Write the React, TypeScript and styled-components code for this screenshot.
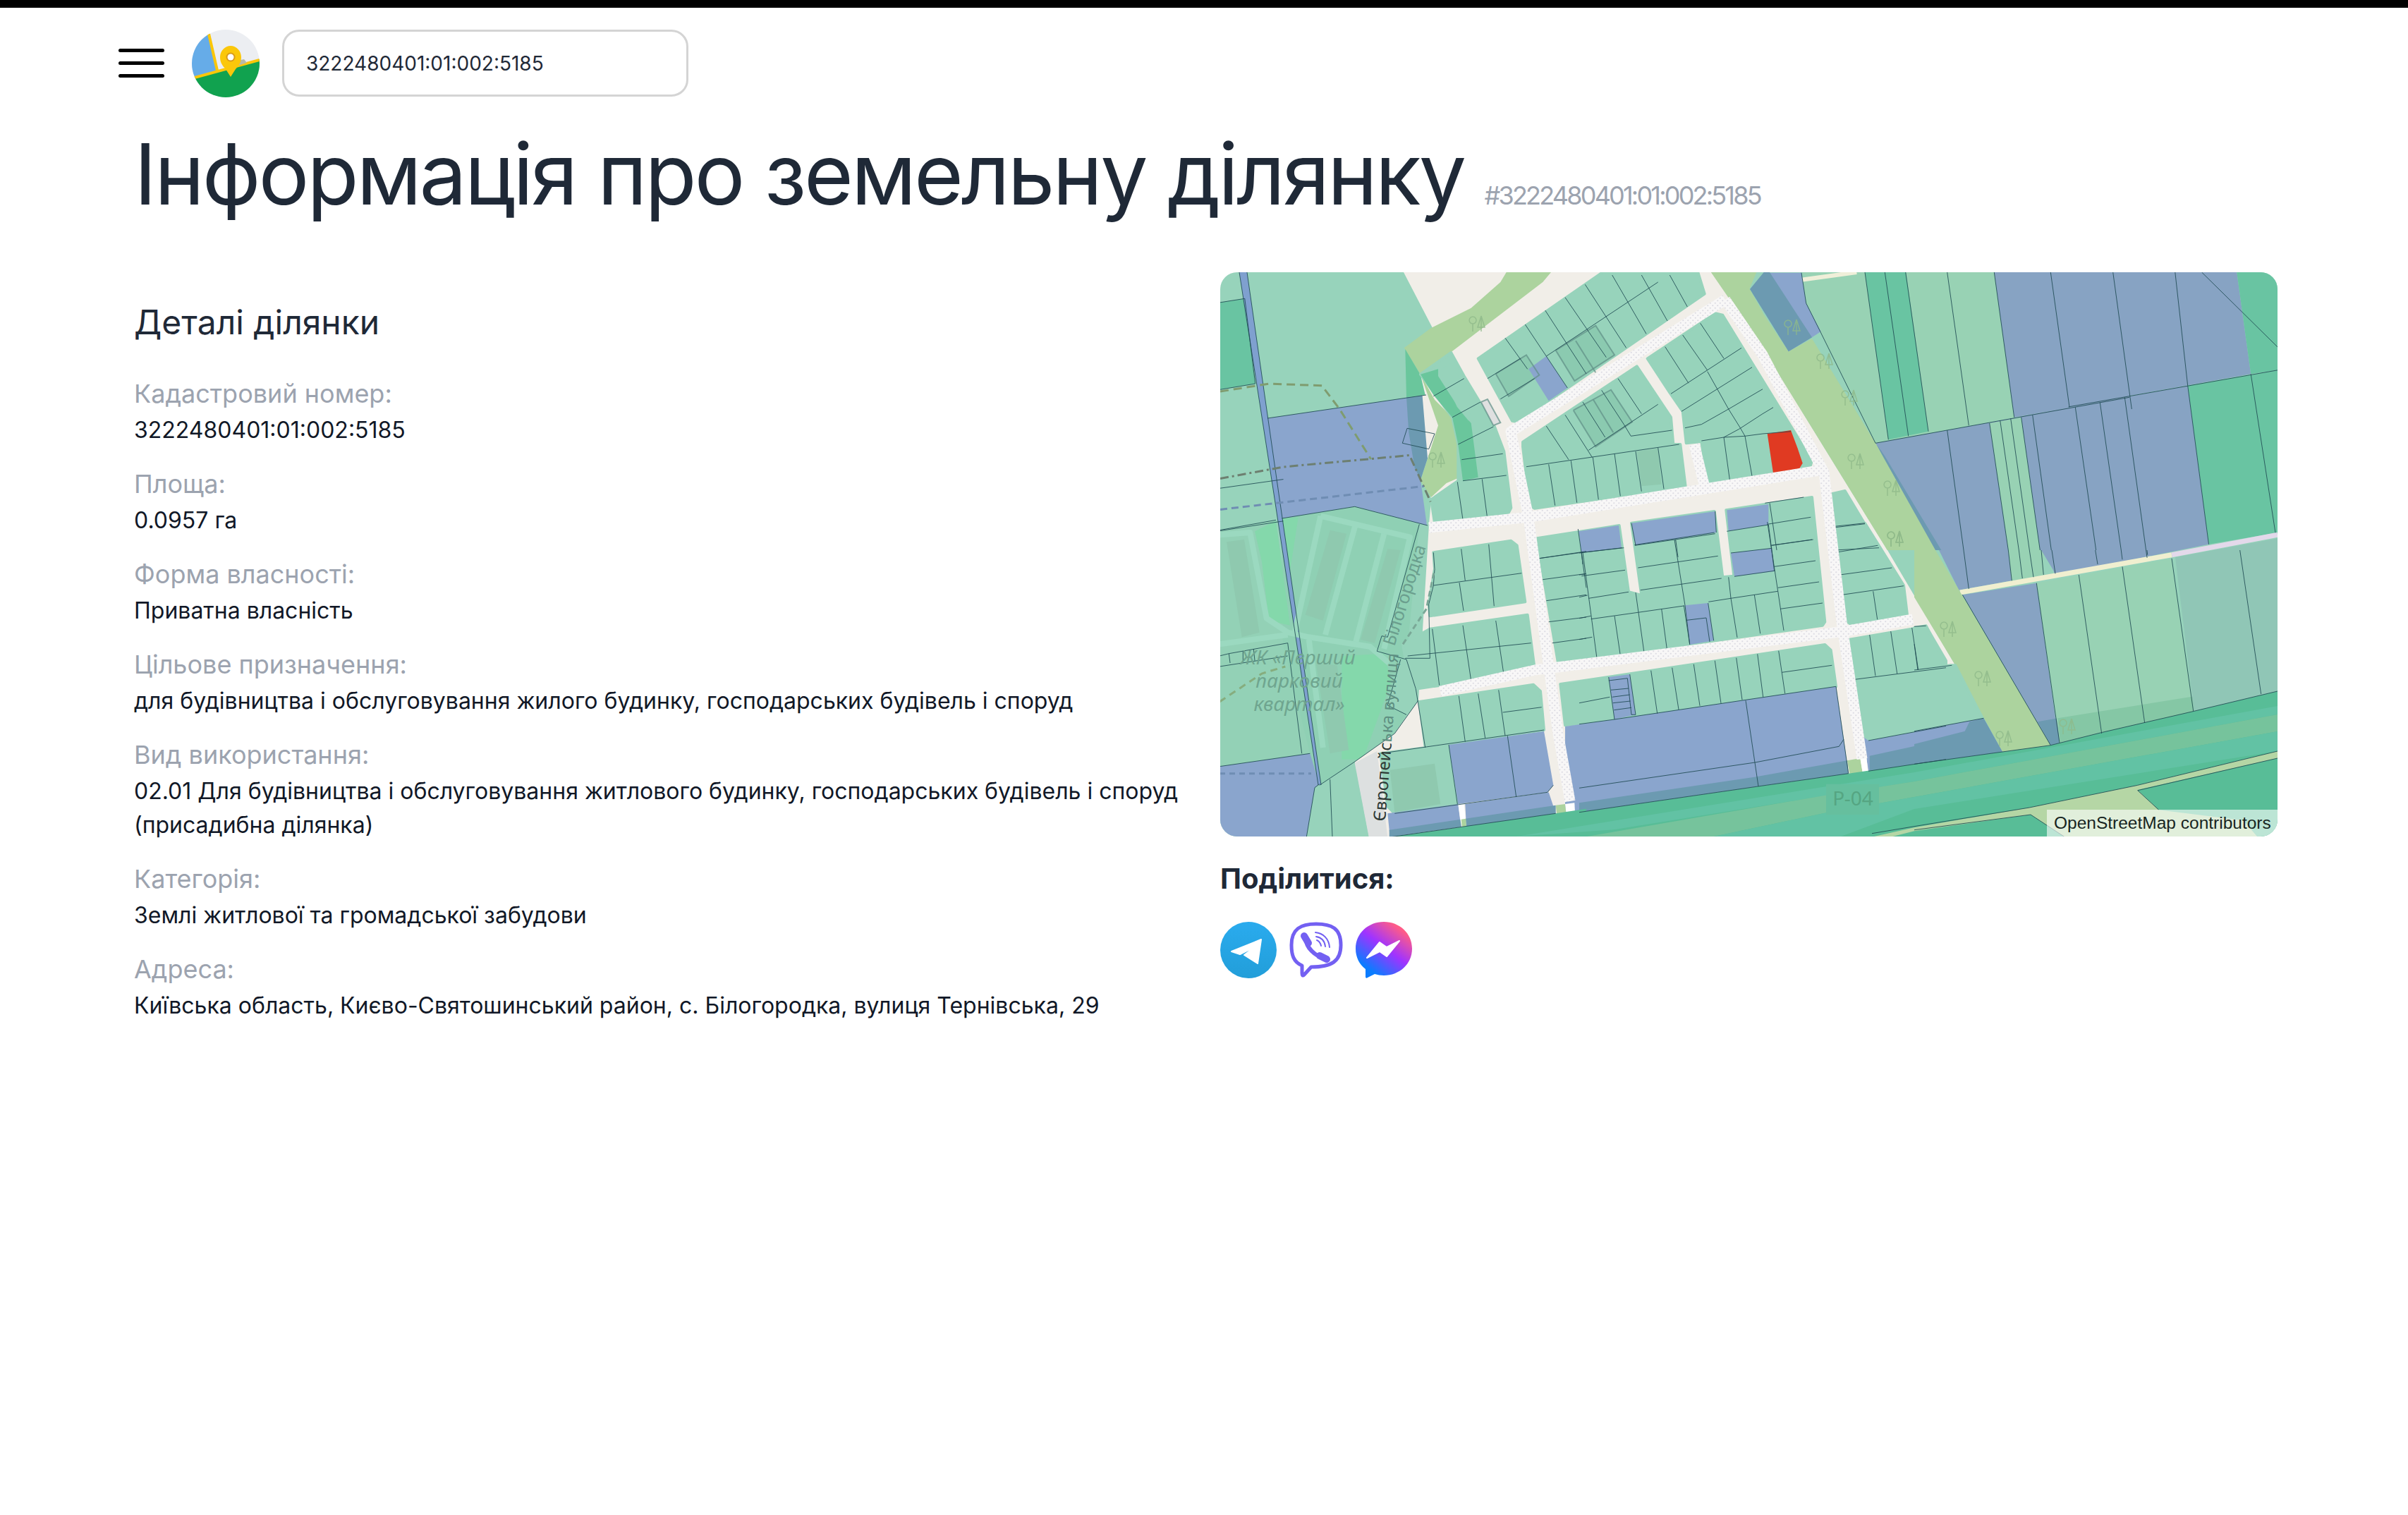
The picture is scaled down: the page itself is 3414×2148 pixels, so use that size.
import styled, { createGlobalStyle } from 'styled-components'

const GlobalStyle = createGlobalStyle`
  html, body {
    margin: 0;
    padding: 0;
    background: #fff;
    font-family: Inter, "Noto Sans", sans-serif;
  }
  * { box-sizing: border-box; }
`

const details = [
  { label: 'Кадастровий номер:', value: '3222480401:01:002:5185' },
  { label: 'Площа:', value: '0.0957 га' },
  { label: 'Форма власності:', value: 'Приватна власність' },
  {
    label: 'Цільове призначення:',
    value: 'для будівництва і обслуговування жилого будинку, господарських будівель і споруд',
  },
  {
    label: 'Вид використання:',
    value:
      '02.01 Для будівництва і обслуговування житлового будинку, господарських будівель і споруд (присадибна ділянка)',
  },
  { label: 'Категорія:', value: 'Землі житлової та громадської забудови' },
  { label: 'Адреса:', value: 'Київська область, Києво-Святошинський район, с. Білогородка, вулиця Тернівська, 29' },
]

// map drawing was traced from several crops, each has its own origin and scale
const tracer = (fx: (x: number) => number, fy: (y: number) => number) => (a: number[]) => {
  const out: string[] = []
  for (let i = 0; i < a.length; i += 2) out.push(+fx(a[i]).toFixed(1) + ',' + +fy(a[i + 1]).toFixed(1))
  return out.join(' ')
}
const crop = (ox: number, oy: number) =>
  tracer(
    (x) => x / 3 + ox - 1731,
    (y) => y / 3 + oy - 386
  )
const P = tracer(
  (x) => (x - 30) * 0.994,
  (y) => (y - 47) * 0.5487
)
const R = tracer(
  (x) => x,
  (y) => y
)
const A = crop(1980, 400)
const B = crop(1730, 700)
const C = crop(2240, 740)
const D = crop(2500, 380)
const E = crop(2715, 780)

const TEAL = '#97d3bb'
const FIELD = '#98d2b4'
const BLUE = '#8aa5cd'
const GREY_BLUE = '#87a3c3'
const DEEP_BLUE = '#6c9ab1'
const DARK_GREEN = '#69c4a2'
const PARK = '#acd39e'
const CREAM = '#f1eee8'
const BUILDING = '#8fc9af'
const HIGHWAY = '#58bd97'

const underlay: [string, string][] = [
  [DARK_GREEN, P([30, 125, 65, 115, 80, 335, 30, 350])],
  [BLUE, R([67, 207, 292, 174, 309, 217, 284, 294, 293, 359, 191, 332, 88, 349])],
  [DEEP_BLUE, A([45, 490, 130, 480, 180, 610, 105, 840, 80, 790, 55, 640])],
  [BLUE, P([368, 47, 412, 47, 385, 85])],
  // housing estate
  ['#93d1b6', B([0, 155, 240, 112, 385, 1105, 0, 1160])],
  ['#8fd0b4', B([265, 105, 575, 55, 850, 130, 795, 705, 770, 705, 715, 900, 795, 940, 740, 1025, 575, 1140, 425, 1240, 385, 1105, 270, 640])],
  ['#84d8ab', B([150, 160, 240, 115, 300, 560, 210, 540, 180, 290])],
  ['#84d8ab', B([265, 105, 335, 100, 295, 360])],
  ['#84d8ab', B([520, 690, 700, 680, 730, 800, 610, 1130, 520, 1130])],
  [BLUE, B([0, 1160, 385, 1105, 425, 1235, 405, 1250, 370, 1460, 0, 1460])],
  [TEAL, B([425, 1240, 575, 1145, 635, 1460, 395, 1460])],
  ['#7fa0cf', R([27, 0, 38, 0, 83, 314, 143, 727, 139, 727, 76, 314])],
  // fields on the right
  [GREY_BLUE, P([1135, 47, 1480, 47, 1500, 310, 1240, 395, 1170, 415])],
  [DARK_GREEN, P([1480, 47, 1538, 47, 1538, 300, 1500, 310])],
  [DARK_GREEN, P([1410, 340, 1538, 300, 1538, 720, 1440, 750])],
  [GREY_BLUE, P([1170, 420, 1410, 340, 1440, 750, 1220, 830])],
  [FIELD, D([170, 18, 985, 18, 1070, 635, 480, 745, 245, 270, 185, 150])],
  [DARK_GREEN, D([435, 18, 610, 18, 705, 695, 535, 730])],
  [GREY_BLUE, D([985, 18, 1560, 18, 1560, 550, 1070, 635])],
  [GREY_BLUE, D([480, 745, 1560, 550, 1560, 1200, 740, 1200])],
  [FIELD, D([965, 660, 1100, 635, 1180, 1200, 1045, 1200])],
  [DEEP_BLUE, D([485, 750, 520, 800, 760, 1200, 700, 1200])],
  [GREY_BLUE, E([105, 0, 400, 0, 415, 130, 190, 170])],
  [GREY_BLUE, E([205, 190, 520, 140, 615, 820, 580, 830])],
  [DEEP_BLUE, E([525, 730, 610, 715, 617, 820, 580, 830])],
  [FIELD, E([400, 0, 550, 0, 550, 105, 415, 130])],
  [GREY_BLUE, E([540, 0, 1120, 0, 600, 100])],
  [FIELD, E([520, 140, 1095, 35, 1190, 690, 620, 820])],
  ['#85c7a5', E([610, 715, 1200, 620, 1190, 690, 620, 820])],
  ['#90c6b6', E([1110, 30, 1545, -50, 1545, 600, 1190, 685])],
]

const neighbourhood = R([
  260, 0, 715, 0, 769, 107, 946, 394, 1042, 557, 984, 600, 919, 707, 502, 767, 240, 800, 211, 800, 191, 694, 247, 654,
  281, 607, 296, 357, 299, 324, 284, 144, 301, 79,
])

const greens: [string, string][] = [
  [PARK, P([730, 47, 795, 47, 785, 90, 804, 151, 804, 242])],
  [PARK, D([0, 190, 110, 355, 210, 300, 480, 745, 735, 1200, 530, 1200, 0, 340])],
  [PARK, E([0, 0, 90, 0, 580, 830, 375, 858, 175, 490, 0, 200])],
  [PARK, A([35, 280, 150, 195, 320, 110, 445, 0, 470, -42, 660, -42, 625, 0, 235, 298, 105, 392])],
  [PARK, A([105, 392, 165, 500, 240, 575, 265, 690, 285, 825, 215, 855, 150, 915, 105, 845, 180, 610])],
  ['#6ac69c', A([40, 285, 105, 395, 125, 480, 45, 490])],
  [BLUE, D([30, 20, 165, 20, 185, 150, 248, 270, 210, 295, 110, 355])],
  [DEEP_BLUE, D([-54, 90, 5, 18, 30, 18, 210, 295, 110, 355])],
]

const blocks: string[] = [
  // north of the diagonal street
  A([350, 325, 880, -42, 1285, -42, 1313, 50, 520, 595, 495, 590]),
  A([1070, 325, 1358, 133, 1390, 140, 1770, 760, 1760, 790, 1325, 855, 1300, 678, 1235, 685, 1220, 550, 1165, 470]),
  A([540, 680, 1025, 358, 1170, 575, 1180, 690, 1210, 690, 1232, 870, 590, 962, 570, 950, 540, 700]),
  A([105, 392, 235, 300, 290, 400, 420, 615, 460, 720, 490, 960, 480, 980, 165, 1025, 150, 925, 265, 845, 265, 690, 240, 575]),
  // west of the main north-south street
  B([910, 250, 1240, 200, 1265, 220, 1300, 460, 895, 520, 890, 470, 915, 320]),
  B([895, 575, 1310, 515, 1340, 745, 1320, 760, 835, 830, 790, 700, 780, 640]),
  B([850, 885, 1335, 812, 1365, 840, 1380, 1005, 875, 1080]),
  B([685, 1105, 975, 1068, 1012, 1320, 745, 1360, 715, 1330]),
  // middle quarter
  C([-180, 70, 170, 15, 210, 298, 265, 312, 222, 5, 575, -45, 610, 235, 658, 230, 625, -50, 990, -105, 1045, 425, 1035, 440, -90, 600]),
  C([-80, 690, 1045, 522, 1070, 545, 1092, 700, 150, 840, -60, 865]),
  C([1150, 500, 1475, 445, 1560, 590, 1560, 870, 1230, 930, 1205, 910, 1170, 670]),
  C([1080, 25, 1215, 5, 1380, 270, 1395, 395, 1150, 432, 1135, 420]),
  D([275, 965, 350, 948, 435, 1090, 495, 1190, 300, 1200]),
  E([0, 330, 50, 322, 135, 490, 0, 510]),
  E([0, 510, 155, 490, 175, 490, 290, 715, 0, 770]),
]

const overlays: [string, string][] = [
  ['#6ac69c', A([105, 392, 180, 370, 180, 400, 270, 540, 320, 600, 350, 830, 285, 845, 265, 690, 240, 575, 160, 480])],
  [TEAL, A([190, 375, 235, 345, 330, 510, 310, 590, 260, 530])],
  [BUILDING, A([1025, 720, 1115, 708, 1130, 860, 1045, 868])],
  ['#8bcab0', A([425, 390, 555, 310, 610, 395, 480, 485])],
  ['#8bcab0', A([680, 290, 850, 185, 930, 310, 760, 420])],
  ['#8bcab0', A([755, 545, 915, 458, 1005, 595, 850, 700])],
  ['#dfe0e0', A([362, 510, 390, 498, 445, 598, 415, 610])],
  [BLUE, A([640, 315, 730, 450, 650, 505, 565, 370])],
  [BLUE, A([778, 1060, 948, 1035, 960, 1130, 790, 1152])],
  [BLUE, C([222, 5, 578, -45, 583, 45, 240, 100])],
  [BLUE, C([628, -50, 805, -75, 805, 12, 635, 38])],
  [BLUE, C([645, 132, 820, 112, 830, 210, 660, 232])],
  [BLUE, C([450, 355, 548, 345, 572, 505, 470, 522])],
  [BLUE, C([125, 660, 215, 648, 240, 820, 150, 840])],
  [BLUE, C([-60, 870, 150, 840, 1092, 700, 1125, 925, 1145, 1070, 760, 1125, 0, 1235, -60, 1245])],
  [DEEP_BLUE, C([0, 1195, 745, 1085, 1140, 1015, 1145, 1070, 760, 1125, 0, 1235])],
  [BLUE, C([1208, 915, 1230, 930, 1560, 870, 1560, 1010, 1230, 1060])],
  [DEEP_BLUE, C([1235, 995, 1560, 925, 1560, 1010, 1235, 1060])],
  [BLUE, B([975, 1068, 1380, 1010, 1420, 1240, 1395, 1270, 1015, 1320])],
  [BLUE, B([715, 1360, 1015, 1320, 1025, 1400, 725, 1460])],
  [BLUE, B([1045, 1320, 1400, 1270, 1430, 1360, 1050, 1420])],
  [DEEP_BLUE, B([722, 1430, 1430, 1325, 1430, 1360, 722, 1460])],
  ['#fff', B([1015, 1320, 1040, 1320, 1050, 1420, 1030, 1425])],
  [PARK, B([1028, 1385, 1048, 1382, 1050, 1420, 1032, 1424])],
  [PARK, B([1430, 1325, 1470, 1320, 1475, 1360, 1435, 1365])],
  ['#fff', B([1470, 1320, 1510, 1315, 1512, 1358, 1475, 1362])],
  [PARK, C([1140, 1015, 1195, 1005, 1205, 1065, 1150, 1070])],
  ['#fff', C([1195, 1005, 1222, 1000, 1228, 1062, 1205, 1065])],
  [BLUE, E([0, 770, 295, 715, 375, 858, 0, 910])],
  [DEEP_BLUE, E([0, 825, 215, 770, 235, 730, 295, 715, 375, 858, 0, 910])],
  [BUILDING, B([725, 1175, 915, 1148, 940, 1320, 745, 1355])],
  ['#dde0e0', B([575, 1145, 670, 1095, 715, 1460, 635, 1460])],
  ['#e03a22', D([20, 705, 120, 690, 150, 770, 170, 830, 155, 855, 45, 872])],
]

const estate: [string, string][] = [
  [BUILDING, B([30, 205, 105, 195, 170, 590, 95, 610])],
  [BUILDING, B([470, 155, 540, 170, 440, 540, 365, 515])],
  [BUILDING, B([715, 235, 770, 240, 660, 635, 600, 620])],
  [BUILDING, B([410, 720, 500, 730, 550, 1090, 470, 1105])],
]

const estatePaths: string[] = [
  B([0, 175, 130, 165, 200, 530, 290, 590, 380, 610, 640, 650, 720, 720]),
  B([430, 95, 320, 590]),
  B([580, 125, 450, 600]),
  B([700, 170, 580, 630]),
  B([430, 95, 810, 185, 700, 660]),
  B([0, 640, 290, 600]),
  B([380, 620, 440, 1080]),
]

const highway: [string, string][] = [
  [HIGHWAY, C([0, 1235, 760, 1125, 1145, 1070, 1560, 1010, 1560, 1340, 0, 1340])],
  [HIGHWAY, B([730, 1460, 1430, 1360, 1560, 1340, 1560, 1460])],
  [HIGHWAY, E([0, 910, 375, 858, 580, 830, 800, 775, 1190, 685, 1545, 600, 1545, 1220, 0, 1220])],
  ['#62c2a4', R([420, 800, 984, 709, 1499, 615, 1499, 627, 984, 722, 560, 790])],
  ['#76c39c', R([520, 800, 856, 742, 984, 722, 1499, 627, 1499, 651, 984, 744, 856, 767, 700, 800])],
  ['#62c2a4', R([700, 800, 856, 767, 984, 744, 1499, 651, 1499, 679, 984, 761, 880, 800])],
  ['#b5d6a5', E([-180, 1220, 0, 1180, 490, 1095, 950, 1000, 1545, 855, 1545, 885, 950, 1020, 1040, 1105, 1400, 1150, 1460, 1220, 640, 1220, 495, 1125, 0, 1195, -100, 1220])],
  ['#66bf9e', C([1050, 1115, 1275, 1115, 1275, 1245, 1050, 1245])],
]

const plotLines: string[] = [
  // upper left fields
  P([30, 125, 65, 115]), P([65, 115, 80, 335]), P([30, 350, 80, 335]), P([30, 605, 120, 582]), P([30, 715, 120, 690]),
  R([67, 207, 292, 174]), R([27, 0, 76, 314, 139, 727]), R([38, 0, 83, 314, 143, 727]),
  // crop A: north quarter
  A([465, 238, 560, 370]), A([550, 180, 640, 315]), A([640, 315, 730, 450]), A([635, 120, 810, 390]), A([720, 65, 895, 320]),
  A([805, 10, 980, 280]), A([920, -30, 1065, 220]), A([1045, -30, 1155, 165]), A([1165, -30, 1240, 105]),
  A([390, 410, 530, 325]), A([640, 315, 1115, 0]), A([445, 497, 590, 410]),
  A([1145, 275, 1245, 430]), A([1220, 225, 1325, 375]), A([1295, 175, 1395, 325]), A([1170, 475, 1470, 280]),
  A([1215, 550, 1515, 362]), A([1325, 380, 1415, 540, 1465, 620, 1485, 655]), A([1230, 620, 1300, 605, 1415, 540, 1560, 455]),
  A([1395, 660, 1460, 625, 1560, 560, 1605, 533]), A([1300, 675, 1395, 660, 1485, 655, 1560, 645, 1680, 635]), A([1395, 660, 1420, 840]), A([1485, 655, 1515, 825]),
  A([640, 612, 735, 755]), A([720, 565, 835, 745]), A([795, 510, 890, 660]), A([875, 460, 970, 605, 1000, 655, 1175, 630]), A([945, 410, 1045, 560]),
  A([820, 715, 1115, 520]), A([555, 785, 1205, 690]), A([650, 775, 677, 950]), A([745, 760, 770, 938]), A([838, 745, 862, 925]),
  A([930, 730, 955, 910]), A([1020, 720, 1045, 890]), A([1115, 705, 1140, 880]),
  A([160, 485, 290, 410]), A([240, 575, 360, 510]), A([265, 690, 415, 615]), A([280, 755, 455, 730]), A([285, 845, 470, 822]),
  A([262, 850, 285, 1010]), A([367, 838, 388, 995]), A([48, 622, 165, 645]), A([165, 645, 140, 710]), A([140, 710, 28, 685, 48, 622]),
  A([610, 1175, 790, 1150, 970, 1130]), A([1015, 1118, 1355, 1065]), A([790, 1150, 795, 1200]), A([1190, 1095, 1200, 1170]),
  // crop B: west of the main street
  B([910, 390, 1285, 338]), B([1028, 235, 1045, 370]), B([1020, 378, 1038, 498]), B([1145, 215, 1168, 478]),
  B([800, 690, 1325, 635]), B([1035, 560, 1070, 795]), B([1175, 540, 1210, 775]), B([905, 575, 935, 815]),
  B([1018, 860, 1045, 1055]), B([1100, 850, 1130, 1040]), B([1187, 835, 1215, 1030]), B([1205, 930, 1370, 908]),
  B([975, 1068, 1012, 1320]), B([685, 1105, 1380, 1005]), B([1225, 1030, 1262, 1290]), B([745, 1360, 1395, 1270, 1420, 1240]),
  B([730, 1460, 1430, 1360]), B([1360, 275, 1560, 245]), B([1375, 365, 1560, 340]), B([1390, 455, 1560, 430]), B([1400, 545, 1560, 525]), B([1415, 635, 1560, 615]),
  B([1525, 150, 1560, 400]), B([0, 155, 240, 112]), B([265, 105, 575, 55, 885, 135]), B([850, 130, 715, 610, 690, 605, 670, 670, 795, 705, 835, 830, 875, 1080]),
  B([770, 705, 715, 900, 795, 940]), B([425, 1240, 575, 1140, 745, 1020, 845, 880]), B([470, 1215, 480, 1460]), B([425, 1235, 405, 1250, 370, 1460]),
  B([0, 1160, 385, 1105]), B([0, 690, 40, 680, 290, 635, 350, 1105]), B([0, 735, 290, 690]), B([40, 680, 45, 720]), B([100, 670, 100, 715]), B([145, 660, 150, 710]),
  B([910, 250, 915, 320, 910, 390, 890, 470, 895, 700, 790, 700]),
  // crop C: middle quarter
  C([237, 100, 578, 50]), C([250, 195, 590, 145]), C([260, 290, 605, 240]), C([660, 232, 830, 208]), C([10, 230, 195, 205]), C([40, 325, 210, 298]),
  C([50, 413, 250, 385, 445, 357]), C([0, 132, 182, 110]), C([0, 410, 50, 400]), C([0, 500, 55, 490]), C([0, 225, 25, 222]), C([0, 320, 35, 312]),
  C([15, 130, 75, 580]), C([150, 400, 175, 568]), C([240, 300, 275, 550]), C([350, 370, 373, 540]), C([445, 355, 470, 520]), C([405, 75, 450, 355]),
  C([548, 345, 572, 505]), C([645, 325, 672, 492]), C([745, 310, 770, 475]), C([845, 295, 870, 462]), C([635, 235, 645, 325, 550, 340]), C([800, 0, 845, 295]),
  C([815, 100, 990, 75]), C([830, 190, 1005, 165]), C([845, 280, 1020, 255]), C([855, 370, 1035, 345]), C([645, 325, 845, 295]),
  C([222, 5, 240, 100]), C([578, -45, 583, 45]), C([628, 40, 805, 12]), C([645, 132, 820, 112]), C([805, 12, 830, 210]),
  C([458, 418, 540, 408, 555, 510]), C([450, 355, 470, 522]),
  C([0, 770, 130, 745]), C([305, 632, 332, 815]), C([395, 620, 423, 798]), C([487, 605, 513, 782]), C([577, 590, 603, 772]), C([668, 578, 693, 757]),
  C([758, 562, 782, 745]), C([848, 548, 875, 730]), C([862, 640, 1075, 610]), C([0, 860, 150, 840, 1092, 700]),
  C([125, 675, 205, 665, 222, 820, 240, 820]), C([135, 715, 210, 708]), C([140, 745, 215, 735]), C([143, 770, 218, 762]), C([148, 800, 222, 790]), C([125, 660, 150, 840]), C([215, 648, 240, 820]),
  C([708, 760, 762, 1125]), C([0, 1132, 748, 1023, 1105, 955, 1125, 925]), C([0, 1235, 760, 1125, 1145, 1070]), C([1092, 700, 1145, 1070]),
  C([1235, 480, 1260, 655]), C([1325, 465, 1352, 645]), C([1415, 450, 1442, 630]), C([1172, 670, 1560, 620]), C([1230, 930, 1560, 868]), C([1230, 1060, 1560, 1010]),
  C([1090, 130, 1270, 100]), C([1108, 225, 1330, 195]), C([1118, 310, 1380, 272]), C([1250, 295, 1268, 415]), C([1075, 20, 1215, 5]),
  D([295, 1105, 435, 1088]), D([305, 1200, 495, 1190]), D([20, 1090, 205, 1060]), D([40, 1180, 215, 1155]), D([10, 1000, 175, 975]), D([30, 1000, 60, 1200]),
  // crop D and E: fields on the right
  D([435, 18, 535, 730]), D([520, 18, 620, 715]), D([608, 18, 705, 695]), D([785, 18, 877, 670]), D([985, 18, 1070, 635]),
  D([1225, 18, 1305, 592]), D([1490, 18, 1570, 600]), D([480, 745, 1560, 550]), D([480, 745, 245, 270, 185, 150, 165, 20]),
  D([785, 690, 855, 1200]), D([965, 660, 1045, 1200]), D([1010, 648, 1090, 1200]), D([1055, 640, 1135, 1200]), D([1100, 635, 1180, 1200]),
  D([1148, 625, 1228, 1200]), D([1330, 592, 1418, 1200]), D([1435, 572, 1525, 1200]),
  P([1240, 395, 1538, 300]), P([1392, 47, 1410, 340]), P([1500, 310, 1535, 720]), P([1430, 47, 1538, 240]), P([1320, 370, 1352, 785]), P([1410, 340, 1440, 750]),
  E([210, 0, 232, 165]), E([400, 0, 415, 130]), E([445, 0, 460, 120]), E([490, 0, 507, 115]), E([540, 0, 550, 105]), E([585, 0, 600, 100]),
  E([770, 0, 780, 60]), E([880, 0, 885, 40]), E([990, 0, 992, 20]), E([520, 140, 618, 820]), E([700, 105, 797, 780]), E([885, 70, 980, 735]),
  E([1095, 35, 1187, 685]), E([1385, 0, 1475, 612]), E([205, 190, 580, 830]), E([0, 910, 375, 858, 580, 830, 800, 775, 1190, 685, 1545, 600]),
  E([-180, 1205, 0, 1175, 490, 1095, 950, 1000, 1545, 855]), E([0, 1190, 495, 1125, 640, 1220]), E([950, 1022, 1545, 885]), E([950, 1022, 1040, 1105]),
  E([0, 510, 160, 490]), E([0, 400, 15, 510]), E([0, 770, 295, 715]), E([0, 325, 50, 322]),
]

// darker outlines of small buildings
const buildingEdges: string[] = [
  A([425, 390, 555, 310, 610, 395, 480, 485, 425, 390]),
  A([680, 290, 850, 185, 930, 310, 760, 420, 680, 290]),
  A([765, 250, 850, 385]),
  A([755, 545, 915, 458, 1005, 595, 850, 700, 755, 545]),
  A([840, 500, 925, 640]),
  A([362, 510, 390, 498, 445, 598, 415, 610, 362, 510]),
]

const dottedRoads: string[] = [
  R([716, 39, 412, 226, 437, 347, 466, 561, 479, 654, 496, 750]),
  R([716, 39, 769, 117, 856, 284, 882, 504, 910, 690]),
  R([296, 362, 439, 347, 769, 294, 849, 281]),
  R([312, 594, 446, 564, 886, 509, 982, 492]),
  R([672, 244, 686, 301]),
]

const treePlaces = [
  [769 + 132, -6 + 277], [769 + 183, -6 + 315], [769 + 188, -6 + 387], [769 + 88, -6 + 135], [769 + 123, -6 + 187], [769 + 42, -6 + 87],
  [984 + 48, 394 + 115], [984 + 97, 394 + 185], [984 + 127, 394 + 270], [984 + 217, 394 + 253],
  [249 + 115, 14 + 62], [249 + 58, 14 + 255], [509 + 448, 354 + 27],
]

function MapDrawing() {
  return (
    <MapSvg viewBox="0 0 1499 800">
      <defs>
        <pattern id="road-dots" width="7" height="7" patternUnits="userSpaceOnUse">
          <rect width="7" height="7" fill="#f8f7f7" />
          <circle cx="1.75" cy="1.75" r="1.1" fill="#dcdbe2" />
          <circle cx="5.25" cy="5.25" r="1.1" fill="#dcdbe2" />
        </pattern>
      </defs>
      <rect width="1499" height="800" fill={TEAL} />
      {underlay.map(([color, p], i) => (
        <polygon key={i} points={p} fill={color} />
      ))}
      {estatePaths.map((p, i) => (
        <polyline key={i} points={p} fill="none" stroke="#9bd9c0" strokeWidth="8" strokeLinejoin="round" />
      ))}
      {estate.map(([color, p], i) => (
        <polygon key={i} points={p} fill={color} />
      ))}
      <polygon points={neighbourhood} fill={CREAM} />
      <polyline points={D([165, 50, 400, 18])} fill="none" stroke="#f0efd9" strokeWidth="6" />
      <polyline points={E([195, 180, 1095, 20])} fill="none" stroke="#f0efd0" strokeWidth="7" />
      <polyline points={E([1095, 20, 1545, -65])} fill="none" stroke="#e3d9ea" strokeWidth="7" />
      {greens.map(([color, p], i) => (
        <polygon key={i} points={p} fill={color} />
      ))}
      {blocks.map((p, i) => (
        <polygon key={i} points={p} fill={TEAL} stroke={TEAL} strokeWidth="4" strokeLinejoin="round" />
      ))}
      {overlays.map(([color, p], i) => (
        <polygon key={i} points={p} fill={color} />
      ))}
      {highway.map(([color, p], i) => (
        <polygon key={i} points={p} fill={color} />
      ))}
      <g fill="none" stroke="#5f8f86" strokeOpacity="0.7" strokeWidth="2">
        {buildingEdges.map((p, i) => (
          <polyline key={i} points={p} />
        ))}
      </g>
      <g fill="none" stroke="#1f4a52" strokeOpacity="0.85" strokeWidth="1">
        {plotLines.map((p, i) => (
          <polyline key={i} points={p} />
        ))}
      </g>
      {dottedRoads.map((p, i) => (
        <polyline key={i} points={p} fill="none" stroke="url(#road-dots)" strokeWidth="15" strokeLinejoin="round" />
      ))}
      <g fill="none" strokeWidth="3">
        <polyline points={P([30, 355, 100, 335, 175, 340, 200, 400, 245, 530])} stroke="#7f9c6f" strokeDasharray="12 7" />
        <polyline points={P([30, 580, 120, 550, 300, 520, 330, 640])} stroke="#6d7f70" strokeDasharray="12 5 3 5" />
        <polyline points={P([30, 660, 320, 600])} stroke="#6f8db3" strokeDasharray="10 6" />
        <polyline points={B([0, 885, 180, 765, 280, 735])} stroke="#86ad7e" strokeDasharray="10 7" />
        <polyline points={B([0, 1190, 390, 1190])} stroke="#6f8db3" strokeDasharray="8 6" />
        <polyline points={B([780, 640, 880, 490, 915, 320])} stroke="#7aa897" strokeDasharray="8 5" />
      </g>
      <g fill="none" stroke="#8fb98a" strokeOpacity="0.8" strokeWidth="1.5">
        {treePlaces.map(([x, y], i) => (
          <path key={i} d={`M${x - 6} ${y + 8}V${y - 3}M${x - 6} ${y - 13}a5 5 0 1 0 .1 0M${x + 6} ${y + 8}V${y - 14}L${x + 1} ${y + 2}H${x + 11}L${x + 6} ${y - 14}`} />
        ))}
      </g>
      <MapLabel x={110} y={556}>ЖК «Перший</MapLabel>
      <MapLabel x={112} y={589}>парковий</MapLabel>
      <MapLabel x={112} y={622}>квартал»</MapLabel>
      <MapStreet transform="translate(247 531) rotate(-72.4)">Білогородка</MapStreet>
      <MapRoadName transform="translate(234 779) rotate(-85.5)">
        Європейс<tspan fill="#5f8f82">ька вулиця</tspan>
      </MapRoadName>
      <MapShield x={897} y={756}>Р-04</MapShield>
    </MapSvg>
  )
}

function Logo() {
  return (
    <LogoSvg viewBox="0 0 96 96">
      <defs>
        <clipPath id="logo-clip">
          <circle cx="48" cy="48" r="48" />
        </clipPath>
      </defs>
      <g clipPath="url(#logo-clip)">
        <rect width="96" height="96" fill="#eceef2" />
        <path d="M0 0H24L36 58L0 68Z" fill="#66ace8" />
        <path d="M0 68L96 42V96H0Z" fill="#11a24f" />
        <path d="M24 6L36 58" stroke="#fbc70a" strokeWidth="4" />
        <path d="M0 69L96 43" stroke="#fbc70a" strokeWidth="4" />
        <path d="M62 52L78 47L74 42L64 44Z" fill="#b9b9a8" />
      </g>
      <path d="M55 67L48 56C43 51 40 46 40 39C40 30 47 23 55 23C63 23 70 30 70 39C70 46 67 51 62 56Z" fill="#fbc70a" />
      <circle cx="55" cy="39" r="6.5" fill="#d99a1c" />
      <circle cx="55" cy="39" r="4.5" fill="#fff" />
    </LogoSvg>
  )
}

function TelegramIcon() {
  return (
    <ShareSvg viewBox="0 0 80 80">
      <defs>
        <linearGradient id="tg" x1="0" y1="0" x2="0" y2="1">
          <stop offset="0" stopColor="#2aabee" />
          <stop offset="1" stopColor="#229ed9" />
        </linearGradient>
      </defs>
      <circle cx="40" cy="40" r="40" fill="url(#tg)" />
      <path d="M16 42L58 25L53 59L34 47L50 35L28 46Z" fill="#fff" stroke="#fff" strokeWidth="2" strokeLinejoin="round" />
    </ShareSvg>
  )
}

function ViberIcon() {
  return (
    <ShareSvg viewBox="0 0 76 80">
      <g fill="none" stroke="#7360f2" strokeLinecap="round" strokeLinejoin="round">
        <path
          d="M38 3C60 3 73 9 73 33C73 56 60 64 31 64L21 75C19 77 18 76 18 73L18 62C6 57 3 47 3 33C3 10 16 3 38 3Z"
          strokeWidth="5"
        />
        <path d="M24 24C23 36 37 49 49 51" strokeWidth="6" />
        <path d="M21 20L27 30" strokeWidth="10" />
        <path d="M43 48L53 53" strokeWidth="10" />
        <path d="M37 15C48 16 56 24 57 36M38 21C45 22 50 27 51 35M39 26C42 27 44 30 45 34" strokeWidth="2" />
      </g>
    </ShareSvg>
  )
}

function MessengerIcon() {
  return (
    <ShareSvg viewBox="0 0 80 80">
      <defs>
        <linearGradient id="ms" x1="0.2" y1="0.95" x2="0.85" y2="0.1">
          <stop offset="0.1" stopColor="#0a7cff" />
          <stop offset="0.55" stopColor="#a033ff" />
          <stop offset="0.95" stopColor="#ff5c87" />
        </linearGradient>
      </defs>
      <path
        d="M40 0C18 0 0 16 0 38C0 50 5 60 14 67V78C14 80 16 80 17 79L27 74C31 75 35 76 40 76C62 76 80 60 80 38C80 16 62 0 40 0Z"
        fill="url(#ms)"
      />
      <path d="M16 51L34 29L44 36L62 27L44 49L34 42Z" fill="#fff" stroke="#fff" strokeWidth="2" strokeLinejoin="round" />
    </ShareSvg>
  )
}

export default function App() {
  return (
    <Page>
      <GlobalStyle />
      <TopBar />
      <Header>
        <Burger>
          <BurgerLine />
          <BurgerLine />
          <BurgerLine />
        </Burger>
        <Logo />
        <SearchInput defaultValue="3222480401:01:002:5185" />
      </Header>
      <Main>
        <Title>
          Інформація про земельну ділянку <TitleNumber>#3222480401:01:002:5185</TitleNumber>
        </Title>
        <Columns>
          <DetailsColumn>
            <DetailsHeading>Деталі ділянки</DetailsHeading>
            <DetailsList>
              {details.map((d) => (
                <DetailItem key={d.label}>
                  <DetailLabel>{d.label}</DetailLabel>
                  <DetailValue>{d.value}</DetailValue>
                </DetailItem>
              ))}
            </DetailsList>
          </DetailsColumn>
          <div>
            <MapBox>
              <MapDrawing />
              <Attribution>OpenStreetMap contributors</Attribution>
            </MapBox>
            <ShareHeading>Поділитися:</ShareHeading>
            <ShareRow>
              <TelegramIcon />
              <ViberIcon />
              <MessengerIcon />
            </ShareRow>
          </div>
        </Columns>
      </Main>
    </Page>
  )
}

const Page = styled.div`
  min-height: 2148px;
  background: #fff;
`
const TopBar = styled.div`
  height: 11px;
  background: #000;
`
const Header = styled.header`
  display: flex;
  align-items: center;
  height: 95px;
  margin-top: 31px;
  padding-left: 168px;
`
const Burger = styled.div`
  display: flex;
  flex-direction: column;
  gap: 13px;
  width: 65px;
  margin-right: 39px;
`
const BurgerLine = styled.span`
  display: block;
  height: 5px;
  border-radius: 3px;
  background: #000;
`
const LogoSvg = styled.svg`
  display: block;
  width: 96px;
  height: 96px;
  margin-right: 32px;
`
const SearchInput = styled.input`
  width: 576px;
  height: 95px;
  padding: 0 31px;
  border: 3px solid #d4d4d4;
  border-radius: 24px;
  outline: none;
  background: #fff;
  color: #1f2937;
  font-family: Inter, sans-serif;
  font-size: 28px;
`
const Main = styled.main`
  padding: 50px 185px 0 190px;
`
const Title = styled.h1`
  margin: 0;
  color: #1f2937;
  font-size: 120px;
  font-weight: 400;
  line-height: 120px;
  letter-spacing: -3.2px;
  white-space: nowrap;
`
const TitleNumber = styled.small`
  margin-left: -2px;
  color: #9ca3af;
  font-size: 36px;
  line-height: 1;
  letter-spacing: -2.8px;
`
const Columns = styled.div`
  display: grid;
  grid-template-columns: 1540px 1499px;
  margin-top: 79px;
`
const DetailsColumn = styled.section`
  padding-top: 39px;
  padding-right: 40px;
`
const DetailsHeading = styled.h2`
  margin: 0 0 41px;
  color: #1f2937;
  font-size: 48px;
  font-weight: 400;
  line-height: 64px;
`
const DetailsList = styled.dl`
  display: flex;
  flex-direction: column;
  gap: 24px;
  margin: 0;
`
const DetailItem = styled.div``
const DetailLabel = styled.dt`
  color: #9ca3af;
  font-size: 36px;
  line-height: 56px;
`
const DetailValue = styled.dd`
  margin: 0;
  color: #111827;
  font-size: 32px;
  line-height: 48px;
`
const MapBox = styled.div`
  position: relative;
  height: 800px;
  overflow: hidden;
  border-radius: 24px;
`
const MapSvg = styled.svg`
  display: block;
  width: 1499px;
  height: 800px;
`
const MapLabel = styled.text`
  fill: #6fa58f;
  font-family: "Noto Sans", sans-serif;
  font-size: 28px;
  font-style: italic;
  text-anchor: middle;
`
const MapStreet = styled.text`
  fill: #6b9f8e;
  font-family: "Noto Sans", sans-serif;
  font-size: 25px;
`
const MapRoadName = styled.text`
  fill: #2f3a36;
  font-family: "Noto Sans", sans-serif;
  font-size: 24px;
`
const MapShield = styled.text`
  fill: #55a582;
  font-family: "Noto Sans", sans-serif;
  font-size: 28px;
  text-anchor: middle;
`
const Attribution = styled.div`
  position: absolute;
  right: 0;
  bottom: 0;
  width: 327px;
  height: 38px;
  padding-left: 10px;
  background: rgba(255, 255, 255, 0.6);
  color: #17251f;
  font-family: "Liberation Sans", Arial, sans-serif;
  font-size: 24.5px;
  line-height: 38px;
  white-space: nowrap;
`
const ShareHeading = styled.h3`
  margin: 32px 0 0;
  color: #1f2937;
  font-size: 40px;
  font-weight: 700;
  line-height: 56px;
`
const ShareRow = styled.div`
  display: flex;
  gap: 16px;
  margin-top: 33px;
`
const ShareSvg = styled.svg`
  display: block;
  width: 80px;
  height: 80px;
`
